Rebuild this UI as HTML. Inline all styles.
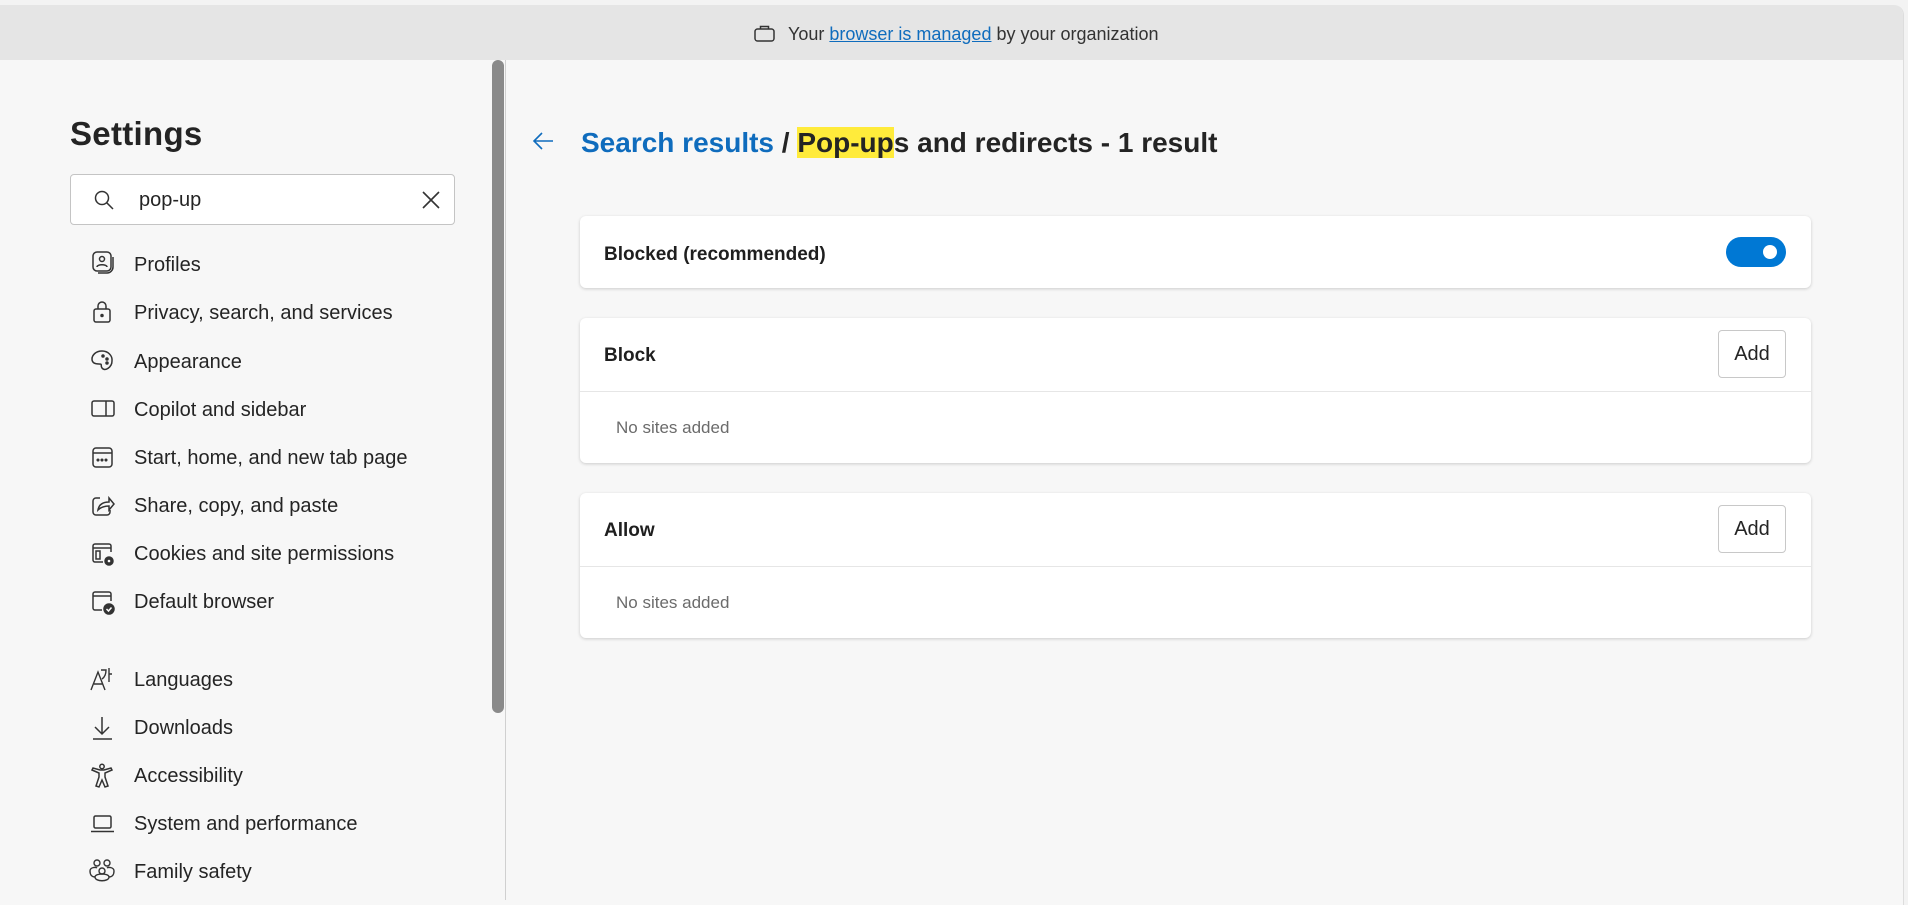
<!DOCTYPE html>
<html><head><meta charset="utf-8"><style>
*{box-sizing:border-box;margin:0;padding:0}
body{width:1908px;height:895px;overflow:hidden;background:#f3f3f3;font-family:"Liberation Sans",sans-serif;color:#1f1f1f;position:relative}
.win{position:absolute;left:0;top:5px;width:1904px;height:900px;background:#f7f7f7;border-radius:0 10px 0 0;border-right:1px solid #ddd;overflow:hidden}
.bar{position:absolute;left:0;top:0;width:100%;height:55px;background:#e5e5e5}
.bar .t{position:absolute;left:788px;top:19px;font-size:18px;color:#333}
.bar a{color:#0f6cbd;text-decoration:underline}
.abs{position:absolute}
.nav{position:absolute;left:134px;font-size:20px;color:#242424;line-height:24px}
.ic{position:absolute;left:90px}
.card{position:absolute;left:580px;width:1231px;background:#fff;border-radius:6px;box-shadow:0 1px 3px rgba(0,0,0,.18)}
.ct{position:absolute;left:24px;font-size:19px;font-weight:bold;color:#1f1f1f}
.ns{position:absolute;left:36px;font-size:17px;color:#6b6b6b}
.add{position:absolute;left:1138px;width:68px;height:48px;border:1px solid #c8c8c8;border-radius:4px;font-size:20px;text-align:center;line-height:46px;color:#242424}
.hr{position:absolute;left:0;width:100%;height:1px;background:#e6e6e6}
</style></head><body>
<div class="win">
<div class="bar">
<svg class="abs" style="left:754px;top:18px" width="21" height="20" viewBox="0 0 21 20"><rect x="1" y="6" width="19" height="12" rx="2.5" fill="none" stroke="#333" stroke-width="1.5"/><path d="M6.5 6V3.5h8V6" fill="none" stroke="#333" stroke-width="1.5"/></svg>
<div class="t">Your <a>browser is managed</a> by your organization</div>
</div>
<div class="abs" style="left:492px;top:55px;width:12px;height:653px;background:#8a8a8a;border-radius:6px"></div>
<div class="abs" style="left:505px;top:55px;width:1px;height:840px;background:#d0d0d0"></div>
<div class="abs" style="left:70px;top:110px;font-size:33px;font-weight:bold;color:#242424;letter-spacing:.3px">Settings</div>
<div class="abs" style="left:70px;top:169px;width:385px;height:51px;background:#fff;border:1px solid #c4c4c4;border-radius:4px">
<svg class="abs" style="left:22px;top:14px" width="22" height="22" viewBox="0 0 22 22"><circle cx="9" cy="9" r="6.5" fill="none" stroke="#333" stroke-width="1.5"/><path d="M13.8 13.8L20 20" stroke="#333" stroke-width="1.5"/></svg>
<div class="abs" style="left:68px;top:14px;font-size:20px;color:#242424">pop-up</div>
<svg class="abs" style="left:350px;top:15px" width="20" height="20" viewBox="0 0 20 20"><path d="M2 2L18 18M18 2L2 18" stroke="#333" stroke-width="1.6"/></svg>
</div>
<svg class="ic" style="top:245px" width="26" height="26" viewBox="0 0 26 26" fill="none" stroke="#333" stroke-width="1.5"><rect x="3" y="2" width="18" height="19" rx="4"/><circle cx="12" cy="9" r="2.5"/><path d="M7 17c0-3 10-3 10 0"/><path d="M23 7v10a6 6 0 0 1-6 6H8"/></svg>
<div class="nav" style="top:248px">Profiles</div>
<svg class="ic" style="top:294px" width="26" height="26" viewBox="0 0 26 26" fill="none" stroke="#333" stroke-width="1.5"><rect x="4" y="10" width="16" height="13" rx="2"/><path d="M8 10V7a4 4 0 0 1 8 0v3"/><circle cx="12" cy="16.5" r="1" fill="#333"/></svg>
<div class="nav" style="top:296px">Privacy, search, and services</div>
<svg class="ic" style="top:343px" width="26" height="26" viewBox="0 0 26 26" fill="none" stroke="#333" stroke-width="1.5"><path d="M12 3a10 9 0 0 1 10 10c0 6-7 11-10 7-2-3 1-4-3-4-5 0-7-2-7-5 0-4 4-8 10-8z"/><circle cx="13" cy="8" r="1" fill="#333"/><circle cx="17" cy="11" r="1" fill="#333"/><circle cx="17" cy="15" r="1" fill="#333"/></svg>
<div class="nav" style="top:345px">Appearance</div>
<svg class="ic" style="top:392px" width="26" height="26" viewBox="0 0 26 26" fill="none" stroke="#333" stroke-width="1.5"><rect x="2" y="4" width="22" height="15" rx="2"/><path d="M16 4v15"/></svg>
<div class="nav" style="top:393px">Copilot and sidebar</div>
<svg class="ic" style="top:440px" width="26" height="26" viewBox="0 0 26 26" fill="none" stroke="#333" stroke-width="1.5"><rect x="3" y="3" width="19" height="19" rx="3"/><path d="M3 8h19"/><circle cx="8" cy="15" r=".8" fill="#333"/><circle cx="12" cy="15" r=".8" fill="#333"/><circle cx="16" cy="15" r=".8" fill="#333"/></svg>
<div class="nav" style="top:441px">Start, home, and new tab page</div>
<svg class="ic" style="top:488px" width="26" height="26" viewBox="0 0 26 26" fill="none" stroke="#333" stroke-width="1.5"><path d="M10 5H6a3 3 0 0 0-3 3v11a3 3 0 0 0 3 3h11a3 3 0 0 0 3-3v-2"/><path d="M8 17c1-6 5-8 11-8V5l5 6-5 6v-4c-5 0-8 1-11 4z"/></svg>
<div class="nav" style="top:489px">Share, copy, and paste</div>
<svg class="ic" style="top:536px" width="28" height="28" viewBox="0 0 28 28" fill="none" stroke="#333" stroke-width="1.5"><path d="M13 21H5a2 2 0 0 1-2-2V5a2 2 0 0 1 2-2h14a2 2 0 0 1 2 2v6"/><path d="M3 7h18"/><rect x="6" y="10" width="4" height="8"/><circle cx="19" cy="20" r="4" fill="#333"/><circle cx="19" cy="20" r="1.3" fill="#fff" stroke="none"/></svg>
<div class="nav" style="top:537px">Cookies and site permissions</div>
<svg class="ic" style="top:584px" width="28" height="28" viewBox="0 0 28 28" fill="none" stroke="#333" stroke-width="1.5"><path d="M12 21H5a2 2 0 0 1-2-2V5a2 2 0 0 1 2-2h14a2 2 0 0 1 2 2v7"/><path d="M3 7h18"/><circle cx="19" cy="20" r="5" fill="#333"/><path d="M16.5 20l2 2 3-3.5" stroke="#fff"/></svg>
<div class="nav" style="top:585px">Default browser</div>
<svg class="ic" style="top:662px" width="26" height="26" viewBox="0 0 26 26" fill="none" stroke="#333" stroke-width="1.4"><path d="M1 23L8 5l7 18M4 17h9"/><path d="M11 3h5c0 4-1 7-4 9M19 1v14M19 7h3"/></svg>
<div class="nav" style="top:663px">Languages</div>
<svg class="ic" style="top:710px" width="26" height="26" viewBox="0 0 26 26" fill="none" stroke="#333" stroke-width="1.5"><path d="M12 2v17M5 12l7 7 7-7M3 24h19"/></svg>
<div class="nav" style="top:711px">Downloads</div>
<svg class="ic" style="top:758px" width="26" height="26" viewBox="0 0 26 26" fill="none" stroke="#333" stroke-width="1.5"><circle cx="12" cy="3.5" r="2.2"/><path d="M2 7l7 3v4l-3 9 3 1 3-7 3 7 3-1-3-9v-4l7-3-1-2-7 2h-4L3 5z"/></svg>
<div class="nav" style="top:759px">Accessibility</div>
<svg class="ic" style="top:806px" width="26" height="26" viewBox="0 0 26 26" fill="none" stroke="#333" stroke-width="1.5"><rect x="4" y="5" width="17" height="12" rx="1.5"/><path d="M1 20.5h23"/></svg>
<div class="nav" style="top:807px">System and performance</div>
<svg class="ic" style="top:854px;left:88px" width="30" height="28" viewBox="0 0 30 28" fill="none" stroke="#333" stroke-width="1.4"><circle cx="9" cy="4" r="3"/><circle cx="19" cy="4" r="3"/><circle cx="14" cy="12" r="3"/><path d="M2 12c0-4 6-4 7-3M26 12c0-4-6-4-7-3M7 18c0-4 14-4 14 0 0 5-14 5-14 0z"/><path d="M2 12c0 5 3 6 5 6M26 12c0 5-3 6-5 6"/></svg>
<div class="nav" style="top:855px">Family safety</div>

<svg class="abs" style="left:532px;top:126px" width="22" height="20" viewBox="0 0 22 20" fill="none" stroke="#0f6cbd" stroke-width="1.6"><path d="M21 10H2M10 2L2 10l8 8"/></svg>
<div class="abs" style="left:581px;top:122px;font-size:28px;font-weight:bold;white-space:nowrap;color:#242424"><span style="color:#0f6cbd">Search results</span> / <span style="background:#ffeb3b">Pop-up</span>s and redirects - 1 result</div>

<div class="card" style="top:211px;height:72px">
<div class="ct" style="top:28px">Blocked (recommended)</div>
<div class="abs" style="left:1146px;top:21px;width:60px;height:30px;border-radius:15px;background:#0078d4"><div class="abs" style="left:37px;top:8px;width:14px;height:14px;border-radius:50%;background:#fff"></div></div>
</div>
<div class="card" style="top:313px;height:145px">
<div class="ct" style="top:27px">Block</div>
<div class="add" style="top:12px">Add</div>
<div class="hr" style="top:73px"></div>
<div class="ns" style="top:100px">No sites added</div>
</div>
<div class="card" style="top:488px;height:145px">
<div class="ct" style="top:27px">Allow</div>
<div class="add" style="top:12px">Add</div>
<div class="hr" style="top:73px"></div>
<div class="ns" style="top:100px">No sites added</div>
</div>
</div>
</body></html>
